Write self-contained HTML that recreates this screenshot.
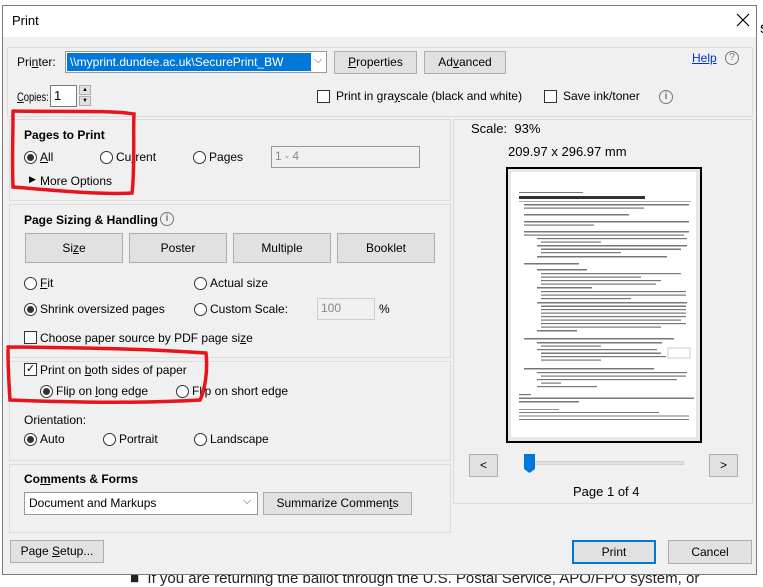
<!DOCTYPE html>
<html><head><meta charset="utf-8"><style>
*{box-sizing:border-box;margin:0;padding:0}
body{width:763px;height:581px;overflow:hidden;background:#fff;font-family:"Liberation Sans",Arial,sans-serif;font-size:12px;color:#000;position:relative}
.a{position:absolute;white-space:nowrap}
.dlg{position:absolute;left:2px;top:5px;width:755px;height:570px;background:#f0f0f0;border:1px solid #7a7a7a}
.title{position:absolute;left:0;top:0;width:753px;height:31px;background:#fff}
.grp{position:absolute;border:1px solid #dcdcdc}
.btn{position:absolute;background:#e1e1e1;border:1px solid #adadad;text-align:center;line-height:20px}
.rad{position:absolute;width:13px;height:13px;border:1px solid #333;border-radius:50%;background:#fff}
.rad.on::after{content:"";position:absolute;left:2px;top:2px;width:7px;height:7px;border-radius:50%;background:#333}
.cb{position:absolute;width:13px;height:13px;border:1px solid #333;background:#fff}
.b{font-weight:bold}
.inp{position:absolute;background:#fff;border:1px solid #7a7a7a}
.dis{position:absolute;background:#f0f0f0;border:1px solid #ccc;color:#888;padding-left:3px;line-height:18px}
.info{position:absolute;width:14px;height:14px;border:1.5px solid #777;border-radius:50%;color:#777;font-size:10px;text-align:center;line-height:11px;font-weight:bold}
u{text-decoration:underline}
</style></head><body>
<div class="a" style="left:760px;top:20px;font-size:16px">s</div>
<div class="a" style="left:130px;top:570px;font-size:15px;color:#222">■ &nbsp;If you are returning the ballot through the U.S. Postal Service, APO/FPO system, or</div>
<div class="dlg">
<div class="title"></div>
<div class="a" style="left:9px;top:7px;font-size:13px">Print</div>
<svg class="a" style="left:733px;top:7px" width="14" height="14"><path d="M1 1L13 13M13 1L1 13" stroke="#000" stroke-width="1.2"/></svg>

<div class="grp" style="left:4px;top:41px;width:746px;height:70px"></div>
<div class="a" style="left:14px;top:49px">Pri<u>n</u>ter:</div>
<div class="inp" style="left:62px;top:45px;width:262px;height:22px;border-color:#999;background:#fff"></div>
<div class="a" style="left:64px;top:47px;width:244px;height:18px;background:#0078d7;color:#fff;padding-left:3px;line-height:18px">\\myprint.dundee.ac.uk\SecurePrint_BW</div>
<div class="a" style="left:311px;top:48px;color:#555;font-size:11px">⌵</div>
<div class="btn" style="left:331px;top:45px;width:83px;height:23px"><u>P</u>roperties</div>
<div class="btn" style="left:421px;top:45px;width:82px;height:23px">Ad<u>v</u>anced</div>
<div class="a" style="left:689px;top:45px;color:#0033cc;text-decoration:underline">Help</div>
<div class="info" style="left:722px;top:45px;font-weight:normal">?</div>

<div class="a" style="left:14px;top:84px;transform:scaleX(0.78);transform-origin:0 0"><u>C</u>opies:</div>
<div class="inp" style="left:47px;top:79px;width:27px;height:22px;padding-left:3px;line-height:20px;font-size:13px">1</div>
<div class="btn" style="left:76px;top:79px;width:12px;height:10px;font-size:6px;line-height:8px">▲</div>
<div class="btn" style="left:76px;top:90px;width:12px;height:10px;font-size:6px;line-height:8px">▼</div>
<div class="cb" style="left:314px;top:84px"></div>
<div class="a" style="left:333px;top:83px">Print in gra<u>y</u>scale (black and white)</div>
<div class="cb" style="left:541px;top:84px"></div>
<div class="a" style="left:560px;top:83px">Save ink/toner</div>
<div class="info" style="left:656px;top:84px">i</div>

<div class="grp" style="left:6px;top:113px;width:442px;height:82px"></div>
<div class="a b" style="left:21px;top:122px">Pages to Print</div>
<div class="rad on" style="left:21px;top:145px"></div><div class="a" style="left:37px;top:144px"><u>A</u>ll</div>
<div class="rad" style="left:97px;top:145px"></div><div class="a" style="left:113px;top:144px">Cu<u>r</u>rent</div>
<div class="rad" style="left:190px;top:145px"></div><div class="a" style="left:206px;top:144px">Pa<u>g</u>es</div>
<div class="dis" style="left:268px;top:140px;width:149px;height:22px;border-color:#999">1 - 4</div>
<div class="a" style="left:26px;top:168px;font-size:9px">▶</div>
<div class="a" style="left:37px;top:168px">More Options</div>

<div class="grp" style="left:6px;top:198px;width:442px;height:154px"></div>
<div class="a b" style="left:21px;top:207px">Page Sizing &amp; Handling</div>
<div class="info" style="left:157px;top:206px">i</div>
<div class="btn" style="left:22px;top:227px;width:98px;height:30px;line-height:28px">Si<u>z</u>e</div>
<div class="btn" style="left:126px;top:227px;width:98px;height:30px;line-height:28px">Poster</div>
<div class="btn" style="left:230px;top:227px;width:98px;height:30px;line-height:28px">Multiple</div>
<div class="btn" style="left:334px;top:227px;width:98px;height:30px;line-height:28px">Booklet</div>
<div class="rad" style="left:21px;top:271px"></div><div class="a" style="left:37px;top:270px"><u>F</u>it</div>
<div class="rad" style="left:191px;top:271px"></div><div class="a" style="left:207px;top:270px">Actual size</div>
<div class="rad on" style="left:21px;top:297px"></div><div class="a" style="left:37px;top:296px">Shrink oversized pages</div>
<div class="rad" style="left:191px;top:297px"></div><div class="a" style="left:207px;top:296px">Custom Scale:</div>
<div class="dis" style="left:314px;top:292px;width:58px;height:22px">100</div>
<div class="a" style="left:376px;top:296px">%</div>
<div class="cb" style="left:21px;top:325px"></div><div class="a" style="left:37px;top:325px">Choose paper source by PDF page si<u>z</u>e</div>

<div class="grp" style="left:6px;top:355px;width:442px;height:100px"></div>
<div class="cb" style="left:21px;top:357px;font-size:11px;line-height:11px;text-align:center">✓</div><div class="a" style="left:37px;top:357px">Print on <u>b</u>oth sides of paper</div>
<div class="rad on" style="left:37px;top:379px"></div><div class="a" style="left:53px;top:378px">Flip on <u>l</u>ong edge</div>
<div class="rad" style="left:173px;top:379px"></div><div class="a" style="left:189px;top:378px">Flip on short edge</div>
<div class="a" style="left:21px;top:407px">Orientation:</div>
<div class="rad on" style="left:21px;top:427px"></div><div class="a" style="left:37px;top:426px">Auto</div>
<div class="rad" style="left:100px;top:427px"></div><div class="a" style="left:116px;top:426px">Portrait</div>
<div class="rad" style="left:191px;top:427px"></div><div class="a" style="left:207px;top:426px">Landscape</div>

<div class="grp" style="left:6px;top:458px;width:442px;height:69px"></div>
<div class="a b" style="left:21px;top:466px">Co<u>m</u>ments &amp; Forms</div>
<div class="inp" style="left:21px;top:486px;width:234px;height:23px;border-color:#999;padding-left:4px;line-height:20px">Document and Markups</div>
<div class="a" style="left:240px;top:489px;color:#555;font-size:11px">⌵</div>
<div class="btn" style="left:260px;top:486px;width:149px;height:23px">Summarize Commen<u>t</u>s</div>
<div class="btn" style="left:7px;top:534px;width:94px;height:23px">Page <u>S</u>etup...</div>

<div class="grp" style="left:450px;top:113px;width:300px;height:385px"></div>
<div class="a" style="left:468px;top:115px;font-size:13px">Scale:&nbsp; 93%</div>
<div class="a" style="left:505px;top:138px;font-size:13px">209.97 x 296.97 mm</div>
<div class="a" style="left:503px;top:161px;width:196px;height:276px;border:2px solid #000;background:#e8e8e8"></div>
<div class="a" style="left:508px;top:166px;width:185px;height:265px;background:#fff"></div>
<svg class="a" style="left:508px;top:166px" width="185" height="265">
<g fill="#777">
<rect x="8" y="20" width="64" height="1"/>
<rect x="8" y="24" width="126" height="3" fill="#333"/>
<rect x="8" y="29" width="172" height="1" fill="#aaa"/>
<rect x="13" y="32" width="165" height="1.5"/><rect x="13" y="35.5" width="120" height="1.2"/>
<rect x="13" y="42" width="105" height="1.5"/>
<rect x="13" y="49" width="165" height="1.5"/><rect x="13" y="52.5" width="70" height="1.2"/>
<rect x="13" y="59" width="165" height="1.5"/><rect x="13" y="62.5" width="160" height="1.2"/>
<rect x="26" y="66" width="150" height="1.2"/><rect x="30" y="69.5" width="60" height="1.2"/>
<rect x="26" y="73" width="150" height="1.5"/><rect x="30" y="76.5" width="140" height="1.5"/><rect x="30" y="80" width="80" height="1.2"/>
<rect x="26" y="84" width="130" height="1.5"/>
<rect x="13" y="91" width="55" height="1.5"/>
<rect x="26" y="97" width="50" height="1.5"/><rect x="30" y="101" width="140" height="1.2"/><rect x="30" y="104.5" width="100" height="1.2"/>
<rect x="30" y="108" width="120" height="1.2"/><rect x="30" y="111.5" width="115" height="1.2"/>
<rect x="26" y="115" width="55" height="1.5"/><rect x="30" y="119" width="145" height="1.2"/><rect x="30" y="122.5" width="145" height="1.2"/><rect x="30" y="126" width="90" height="1.2"/>
<rect x="26" y="130" width="150" height="1.5"/><rect x="30" y="133.5" width="145" height="1.5"/><rect x="30" y="137" width="145" height="1.2"/><rect x="30" y="140.5" width="145" height="1.2"/><rect x="30" y="144" width="145" height="1.2"/><rect x="30" y="147.5" width="140" height="1.2"/><rect x="30" y="151" width="145" height="1.2"/><rect x="30" y="154.5" width="120" height="1.2"/>
<rect x="26" y="158" width="40" height="1.5"/>
<rect x="13" y="166" width="150" height="1.5"/>
<rect x="26" y="170" width="125" height="1.5"/><rect x="30" y="173.5" width="60" height="1.2"/>
<rect x="26" y="177" width="120" height="1.2"/><rect x="30" y="180.5" width="120" height="1.5"/><rect x="30" y="184" width="125" height="1.2"/><rect x="30" y="187.5" width="60" height="1.2"/>
<rect x="157" y="176" width="22" height="10" fill="none" stroke="#aaa" stroke-width=".6"/>
<rect x="13" y="196" width="130" height="1.5"/>
<rect x="26" y="200" width="150" height="1.2"/><rect x="30" y="203.5" width="145" height="1.2"/><rect x="26" y="207" width="140" height="1.2"/><rect x="30" y="210.5" width="20" height="1.2"/><rect x="26" y="214" width="60" height="1.2"/>
<rect x="8" y="222" width="12" height="1.2"/>
<rect x="8" y="225.5" width="175" height="1.5"/><rect x="8" y="229" width="60" height="1.5"/>
<rect x="8" y="237" width="40" height="0.8"/>
<rect x="8" y="240" width="140" height="1"/><rect x="8" y="243.5" width="170" height="1"/><rect x="8" y="247" width="170" height="1"/>
</g></svg>
<div class="btn" style="left:466px;top:448px;width:29px;height:23px">&lt;</div>
<div class="a" style="left:521px;top:455px;width:160px;height:4px;background:#e0e0e0;border:1px solid #d0d0d0"></div>
<svg class="a" style="left:521px;top:448px" width="12" height="20"><path d="M0 0H11V15L5.5 19L0 15Z" fill="#0078d7"/></svg>
<div class="btn" style="left:706px;top:448px;width:29px;height:23px">&gt;</div>
<div class="a" style="left:570px;top:478px;font-size:13px">Page 1 of 4</div>
<div class="btn" style="left:569px;top:534px;width:84px;height:24px;border:2px solid #0078d7;line-height:20px">Print</div>
<div class="btn" style="left:665px;top:534px;width:84px;height:24px;line-height:22px">Cancel</div>
</div>

<svg class="a" style="left:0;top:0" width="763" height="581">
<g fill="none" stroke="#e8141c" stroke-width="3.5" stroke-linecap="round">
<path d="M13 111 C13 140 12 160 13 187 C50 190 100 195 132 193 C135 170 133 130 134 114 C110 110 60 112 13 111"/>
<path d="M8 350 C8 370 9 385 10 400 C60 402 130 404 200 400 C205 390 208 370 206 353 C160 350 120 348 8 347"/>
</g></svg>
</body></html>
